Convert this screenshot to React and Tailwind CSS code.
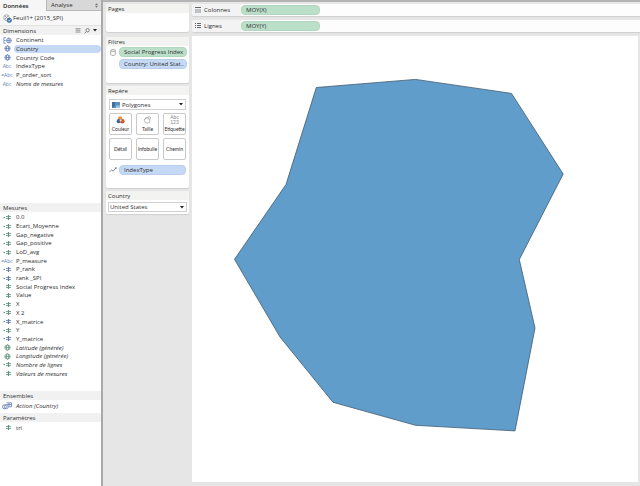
import React from 'react';

const GREEN = 'text-[#5f9480]';
const BLUE = 'text-[#5f7db5]';

function Globe() {
  return (
    <svg viewBox="0 0 8 8" className="h-[7px] w-[7px]" fill="none" stroke="currentColor" strokeWidth="0.9">
      <circle cx="4" cy="4" r="3" />
      <ellipse cx="4" cy="4" rx="1.3" ry="3" />
      <path d="M1 4h6" />
    </svg>
  );
}

function Hash({ computed }) {
  return (
    <svg viewBox="0 0 9 7" className="h-[7px] w-[9px]" fill="none" stroke="currentColor">
      <path d="M5.5 1v5" strokeWidth="1.2" />
      <path d="M3 2.500h5M3 4.500h5" strokeWidth="0.800" />
      {computed && <path d="M0.500 3.500h1.500" strokeWidth="1" />}
    </svg>
  );
}

function Hierarchy() {
  return (
    <svg viewBox="0 0 10 8" className="h-[7px] w-[9px]" fill="none" stroke="currentColor" strokeWidth="0.8">
      <path d="M0.8 0.8h2.4M0.8 0.8v6.4h2.4M1 3.9h2" />
      <circle cx="6.6" cy="4" r="2.8" />
      <ellipse cx="6.6" cy="4" rx="1.1" ry="2.8" />
      <path d="M3.8 4h5.6" />
    </svg>
  );
}

function SetIcon() {
  return (
    <svg viewBox="0 0 10 8" className="h-[8px] w-[10px]" fill="none" stroke="currentColor" strokeWidth="0.8">
      <circle cx="2.4" cy="4.8" r="2" />
      <circle cx="4.2" cy="4.8" r="2" />
      <path d="M4.5 0.8h5v4h-3M4.5 2.5h5M7 0.8v4" />
    </svg>
  );
}

function FieldIcon({ kind }) {
  switch (kind) {
    case 'hierarchy':
      return <Hierarchy />;
    case 'globe':
      return <Globe />;
    case 'abc':
      return <span className="text-[5px]">Abc</span>;
    case 'cabc':
      return <span className="text-[5px]">=Abc</span>;
    case 'set':
      return <SetIcon />;
    default:
      return <Hash computed={kind === 'chash'} />;
  }
}

const dimensions = [
  ['hierarchy', BLUE, 'Continent'],
  ['globe', BLUE, 'Country', 'selected'],
  ['globe', BLUE, 'Country Code'],
  ['abc', BLUE, 'IndexType'],
  ['cabc', BLUE, 'P_order_sort'],
  ['abc', BLUE, 'Noms de mesures', 'italic'],
];

const measures = [
  ['chash', GREEN, '0.0'],
  ['chash', GREEN, 'Ecart_Moyenne'],
  ['chash', GREEN, 'Gap_negative'],
  ['chash', GREEN, 'Gap_positive'],
  ['chash', GREEN, 'LoD_avg'],
  ['cabc', BLUE, 'P_measure'],
  ['chash', BLUE, 'P_rank'],
  ['chash', BLUE, 'rank _SPI'],
  ['hash', GREEN, 'Social Progress Index'],
  ['hash', GREEN, 'Value'],
  ['chash', GREEN, 'X'],
  ['chash', GREEN, 'X 2'],
  ['chash', BLUE, 'X_matrice'],
  ['chash', GREEN, 'Y'],
  ['chash', BLUE, 'Y_matrice'],
  ['globe', GREEN, 'Latitude (générée)', 'italic'],
  ['globe', GREEN, 'Longitude (générée)', 'italic'],
  ['chash', GREEN, 'Nombre de lignes', 'italic'],
  ['hash', GREEN, 'Valeurs de mesures', 'italic'],
];

function FieldList({ items, className }) {
  return (
    <ul className={`grid auto-rows-fr ${className}`}>
      {items.map(([kind, color, name, mode]) => (
        <li key={name} className="flex min-h-0 items-center">
          <span className={`flex w-[14px] shrink-0 items-center justify-center ${color}`}>
            <FieldIcon kind={kind} />
          </span>
          <span
            className={`flex-1 whitespace-nowrap pl-[2px] ${mode === 'selected' ? 'rounded-[4px] bg-[#c6d9f4]' : ''} ${mode === 'italic' ? 'italic' : ''}`}
          >
            {name}
          </span>
        </li>
      ))}
    </ul>
  );
}

function Section({ title, tools, className, children }) {
  return (
    <section className={className}>
      <header className="mb-px flex h-[9px] items-center justify-between bg-[#f1f1f1] pr-1 pl-[3px]">
        <h2>{title}</h2>
        {tools}
      </header>
      {children}
    </section>
  );
}

function Caret() {
  return (
    <svg viewBox="0 0 4 3" className="h-[3px] w-[4px]" fill="#222">
      <path d="M0 0h4L2 2.6z" />
    </svg>
  );
}

function DimensionTools() {
  return (
    <span className="flex items-center gap-[3px] text-[#777]">
      <button aria-label="Afficher les données">
        <svg viewBox="0 0 6 5" className="h-[5px] w-[6px]" fill="none" stroke="currentColor" strokeWidth="0.5">
          <path d="M0.3 0.5h5.4M0.3 2.3h5.4M0.3 4.2h5.4M2 0.5v4M4 0.5v4" />
        </svg>
      </button>
      <button aria-label="Rechercher">
        <svg viewBox="0 0 6 6" className="h-[6px] w-[6px]" fill="none" stroke="currentColor" strokeWidth="0.9">
          <circle cx="3.6" cy="2.2" r="1.7" />
          <path d="M2.4 3.6L0.6 5.4" />
        </svg>
      </button>
      <button aria-label="Menu">
        <Caret />
      </button>
    </span>
  );
}

function DataPane() {
  return (
    <aside className="flex w-[103px] shrink-0 flex-col border-r-2 border-[#a9a9a9] bg-white">
      <div className="flex h-[11px]" role="tablist">
        <button role="tab" aria-selected="true" className="w-[46px] bg-[#f6f6f6] pl-[3px] text-left font-semibold text-[#222]">
          Données
        </button>
        <button
          role="tab"
          aria-selected="false"
          className="flex flex-1 items-center justify-between border-b border-l border-[#b8b8b8] bg-[#d8d8d8] pr-[3px] pl-[4px]"
        >
          Analyse
          <svg viewBox="0 0 4 6" className="h-[5px] w-[3px]" fill="#777">
            <path d="M2 0L4 2.4H0zM2 6L0 3.4h4z" />
          </svg>
        </button>
      </div>
      <div className="flex h-[15px] items-center gap-px border-b border-[#e2e2e2] bg-[#f8f8f8] pl-[3px]">
        <svg viewBox="0 0 9 9" className="h-[9px] w-[9px]" fill="none">
          <circle cx="3.5" cy="3.6" r="2.8" stroke="#888" strokeWidth="0.7" />
          <path d="M2 2l3 3M5 2L2 5" stroke="#888" strokeWidth="0.7" />
          <circle cx="6.3" cy="6.2" r="2.5" fill="#3e72ad" />
          <path d="M5 6.2l1 1 1.6-2" stroke="#fff" strokeWidth="0.7" />
        </svg>
        Feuil1+ (2015_SPI)
      </div>
      <Section title="Dimensions" tools={<DimensionTools />} className="h-[177px]">
        <FieldList items={dimensions} className="h-[52px]" />
      </Section>
      <Section title="Mesures" className="h-[188px]">
        <FieldList items={measures} className="h-[165px]" />
      </Section>
      <Section title="Ensembles" className="h-[22px]">
        <FieldList items={[['set', BLUE, 'Action (Country)', 'italic']]} className="h-[9px]" />
      </Section>
      <Section title="Paramètres">
        <FieldList items={[['hash', GREEN, 'tri']]} className="h-[9px]" />
      </Section>
    </aside>
  );
}

function Card({ title, className, children }) {
  return (
    <section className={`rounded-[2px] bg-white shadow-[0_1px_1px_#cfcfcf] ${className}`}>
      <h2 className="flex h-[9px] items-center rounded-t-[2px] bg-[#f3f3f1] pl-[2px]">{title}</h2>
      {children}
    </section>
  );
}

function Pill({ tone, className, children }) {
  const fill = tone === 'green' ? 'bg-[#bcdfca] border-[#b0d6bf]' : 'bg-[#c6d9f4] border-[#b9cfee]';
  return (
    <div className={`flex h-[10px] items-center overflow-hidden rounded-[4px] border pl-[4px] whitespace-nowrap ${fill} ${className ?? ''}`}>
      {children}
    </div>
  );
}

const markButtons = [
  ['Couleur', 'color'],
  ['Taille', 'size'],
  ['Etiquette', 'label'],
  ['Détail'],
  ['Infobulle'],
  ['Chemin'],
];

function MarkIcon({ kind }) {
  if (kind === 'color') {
    return (
      <svg viewBox="0 0 9 8" className="h-[8px] w-[9px]">
        <circle cx="4.1" cy="2.3" r="2.1" fill="#e8923c" />
        <circle cx="2.8" cy="5.2" r="2.1" fill="#34659c" />
        <circle cx="6.3" cy="5.2" r="2.3" fill="#d0562b" />
        <circle cx="4.6" cy="4.4" r="1.1" fill="#f4d9b8" />
      </svg>
    );
  }
  if (kind === 'size') {
    return (
      <svg viewBox="0 0 9 8" className="h-[8px] w-[9px]" fill="none" stroke="#999" strokeWidth="0.7">
        <circle cx="4.2" cy="4.4" r="2.8" />
        <circle cx="6.2" cy="2" r="1.3" fill="#fff" />
        <path d="M1.5 3.5L4.5 1" />
      </svg>
    );
  }
  return (
    <span className="flex flex-col text-center text-[5px] leading-[5px] text-[#888]">
      <span>Abc</span>
      <span>123</span>
    </span>
  );
}

function SelectBox({ label, value, className, children }) {
  return (
    <div className={`relative border border-[#d0d0d0] bg-white ${className}`}>
      <select aria-label={label} className="block h-full w-full appearance-none bg-transparent outline-none" defaultValue={value}>
        <option>{value}</option>
      </select>
      {children}
      <span className="pointer-events-none absolute inset-y-0 right-[2px] flex items-center">
        <Caret />
      </span>
    </div>
  );
}

function CardsPane() {
  return (
    <div className="flex w-[83px] shrink-0 flex-col pt-[2px]">
      <Card title="Pages" className="mb-[5px] h-[28px]" />
      <Card title="Filtres" className="mb-[3px] h-[46px]">
        <div className="mt-px grid grid-cols-[11px_1fr] items-center gap-x-[2px] gap-y-[2px] pr-[2px]">
          <svg viewBox="0 0 6 7" className="ml-[4px] h-[7px] w-[6px]" fill="none" stroke="#888" strokeWidth="0.7">
            <ellipse cx="3" cy="1.5" rx="2.3" ry="1" />
            <path d="M0.7 1.5v4c0 1.3 4.6 1.3 4.6 0v-4" />
          </svg>
          <Pill tone="green">Social Progress Index</Pill>
          <Pill tone="blue" className="col-start-2">
            Country: United Stat..
          </Pill>
        </div>
      </Card>
      <Card title="Repère" className="mb-[3px] h-[102px]">
        <div className="flex flex-col gap-[3px] px-[3px] pt-[4px]">
          <SelectBox label="Repère" value="Polygones" className="h-[11px] pl-[12px]">
            <svg viewBox="0 0 8 6" className="absolute top-[2px] left-[2px] h-[6px] w-[8px]">
              <path d="M0 0h8v6H0z" fill="#5d91bd" />
              <path d="M0 0h3v4l-3 2z" fill="#3f6f9d" />
              <path d="M4 3.500h4V6H4z" fill="#a7c4de" />
            </svg>
          </SelectBox>
          <div className="grid grid-cols-3 gap-x-[4px] gap-y-[3px]">
            {markButtons.map(([name, icon]) => (
              <button
                key={name}
                className="flex h-[22px] min-w-0 flex-col items-center justify-center gap-px rounded-[2px] border border-[#c9c9c9] bg-white font-['Lato',sans-serif] text-[5px] leading-[7px]"
              >
                {icon && (
                  <span className="flex h-[10px] items-center">
                    <MarkIcon kind={icon} />
                  </span>
                )}
                {name}
              </button>
            ))}
          </div>
          <div className="mt-[2px] grid grid-cols-[10px_1fr] items-center">
            <svg viewBox="0 0 8 6" className="h-[6px] w-[8px]" fill="none" stroke="#5a6b85" strokeWidth="0.8">
              <path d="M0.5 4.800L2.600 3l1.600 1.200L6.800 1" />
              <circle cx="7" cy="1" r="0.5" />
            </svg>
            <Pill tone="blue">IndexType</Pill>
          </div>
        </div>
      </Card>
      <Card title="Country" className="h-[23px]">
        <div className="px-[2px] pt-[2px]">
          <SelectBox label="Country" value="United States" className="h-[10px] pl-px" />
        </div>
      </Card>
    </div>
  );
}

function Shelf({ title, field, rows }) {
  return (
    <div className="flex h-[12px] items-center rounded-l-[2px] bg-[#fdfdfd] shadow-[0_1px_1px_#cfcfcf]">
      <div className="flex h-full w-[49px] items-center gap-[3px] rounded-l-[2px] bg-[#f3f3f3] pl-[3px]">
        <svg viewBox="0 0 6 6" className="h-[6px] w-[6px]" fill="none" stroke="#666" strokeWidth="1">
          {rows ? (
            <path d="M0 0.500h1M0 2.500h1M0 4.500h1M2 0.500h4M2 2.500h4M2 4.500h4" />
          ) : (
            <>
              <path d="M0 0.500h6" />
              <path d="M0 2h6v4H0z" fill="#b5b9c0" stroke="none" />
              <path d="M2 2v4M4 2v4" stroke="#ddd" strokeWidth="0.500" />
            </>
          )}
        </svg>
        {title}
      </div>
      <Pill tone="green" className="w-[79px]">
        {field}
      </Pill>
    </div>
  );
}

function Worksheet() {
  return (
    <main className="flex min-w-0 flex-1 flex-col pt-[2px]">
      <div className="mb-[4px] flex flex-col gap-[4px]">
        <Shelf title="Colonnes" field="MOY(X)" />
        <Shelf title="Lignes" field="MOY(Y)" rows />
      </div>
      <div className="mr-[2px] mb-[4px] flex-1 bg-white">
        <svg viewBox="0 0 446 446" className="block w-full" role="img" aria-label="Polygone">
          <polygon
            points="124.300,51.500 223.500,43.400 319.500,57.400 371.200,138 327.300,223.500 343,292 323,394.900 223.500,389.300 141,366.300 88,301 42.500,223.300 94,148.500"
            fill="#619dca"
            stroke="#3f5b70"
            strokeWidth="0.8"
          />
        </svg>
      </div>
    </main>
  );
}

export default function App() {
  return (
    <div className="flex min-h-screen bg-[#e6e6e6] font-['Open_Sans','Noto_Sans',sans-serif] text-[6px] leading-[8px] text-[#2e2e2e]">
      <DataPane />
      <div className="flex min-w-0 flex-1 gap-[3px] border-t-2 border-[#b4b4b4] pl-[3px]">
        <CardsPane />
        <Worksheet />
      </div>
    </div>
  );
}
